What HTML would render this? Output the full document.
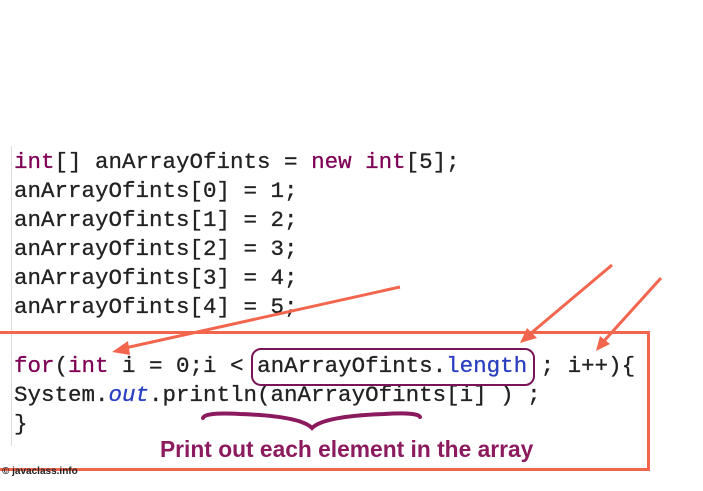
<!DOCTYPE html>
<html><head><style>
body{margin:0;width:703px;height:491px;background:#fff;position:relative;overflow:hidden}
.c{position:absolute;left:14px;font-family:"Liberation Mono","Courier New",monospace;font-size:22.5px;color:#222;white-space:pre;line-height:29px;-webkit-text-stroke:0.3px #222}
.k{color:#7f0055;-webkit-text-stroke:0.3px #7f0055}
.b{color:#2a3fc0;-webkit-text-stroke:0.3px #2a3fc0}
.i{font-style:italic;color:#2a3fc0;-webkit-text-stroke:0.3px #2a3fc0}
</style></head><body>
<div style="position:absolute;left:11px;top:146px;width:1px;height:300px;background:#ddd"></div>
<div class="c" style="top:148px"><span class="k">int</span>[] anArrayOfints = <span class="k">new int</span>[5];
anArrayOfints[0] = 1;
anArrayOfints[1] = 2;
anArrayOfints[2] = 3;
anArrayOfints[3] = 4;
anArrayOfints[4] = 5;</div>
<div style="position:absolute;left:-3px;top:331px;width:647px;height:134px;border:3px solid #f2664e"></div>
<div class="c" style="top:352px"><span class="k">for</span>(<span class="k">int</span> i = 0;i &lt; anArrayOfints.<span class="b">length</span> ; i++){
System.<span class="i">out</span>.println(anArrayOfints[i] ) ;
}</div>
<div style="position:absolute;left:251px;top:348px;width:280px;height:34px;border:2px solid #7a1458;border-radius:10px"></div>
<svg style="position:absolute;left:0;top:0" width="703" height="491">
<g stroke="#f2664e" stroke-width="3" fill="#f2664e">
<line x1="400" y1="287" x2="125" y2="348"/><path d="M112,352L128,341L130,355z" stroke="none"/>
<line x1="612" y1="265" x2="530" y2="334"/><path d="M520,343L527,328L537,338z" stroke="none"/>
<line x1="661" y1="278" x2="604" y2="341"/><path d="M596,351L600,336L610,344z" stroke="none"/>
</g>
<path d="M203,418 Q205,412 240,414 Q300,416 312,428 Q324,416 384,414 Q418,412 420,417" fill="none" stroke="#8b1a5e" stroke-width="4" stroke-linecap="round"/>
</svg>
<div style="position:absolute;left:160px;top:436px;font-family:'Liberation Sans',sans-serif;font-weight:bold;font-size:23px;color:#8b1a5e;white-space:nowrap;transform:scaleX(0.99);transform-origin:left">Print out each element in the array</div>
<div style="position:absolute;left:2px;top:466px;font-family:'Liberation Sans',sans-serif;font-weight:bold;font-size:10px;color:#222">© javaclass.info</div>
</body></html>
